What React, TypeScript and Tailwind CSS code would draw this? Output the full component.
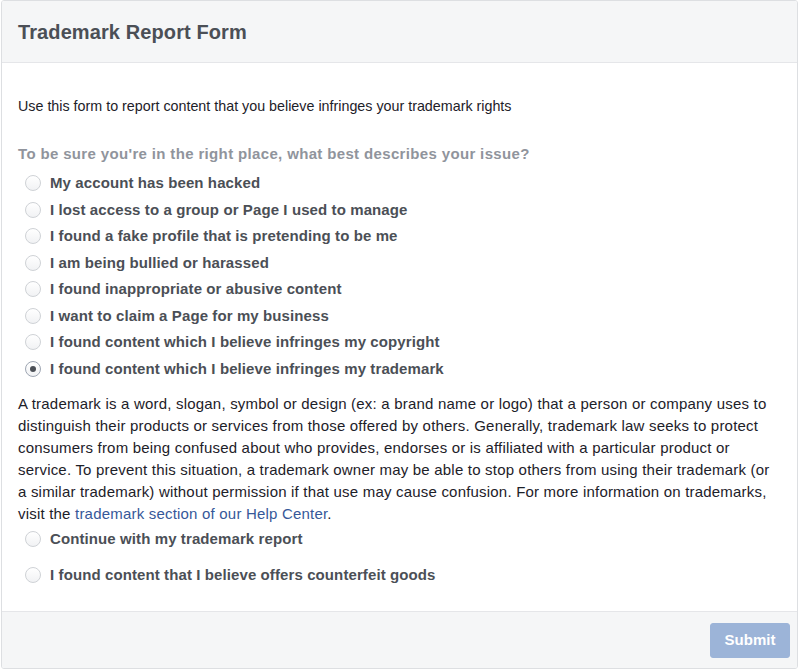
import React, { useState } from 'react'

const issues = [
  'My account has been hacked',
  'I lost access to a group or Page I used to manage',
  'I found a fake profile that is pretending to be me',
  'I am being bullied or harassed',
  'I found inappropriate or abusive content',
  'I want to claim a Page for my business',
  'I found content which I believe infringes my copyright',
  'I found content which I believe infringes my trademark',
]

const followUps = [
  'Continue with my trademark report',
  'I found content that I believe offers counterfeit goods',
]

const Radio: React.FC<{ checked: boolean }> = ({ checked }) => (
  <span
    className={`w-[16px] h-[16px] rounded-full border flex items-center justify-center flex-shrink-0 bg-gradient-to-b from-white to-[#f1f2f4] ${
      checked ? 'border-[#9ea6b3]' : 'border-[#cfd2d6]'
    }`}
  >
    {checked && <span className="w-[6px] h-[6px] rounded-full bg-[#4b4f56]"></span>}
  </span>
)

export default function App() {
  const [issue, setIssue] = useState(7)
  const [followUp, setFollowUp] = useState<number | null>(null)

  return (
    <div className="w-[800px] h-[670px] bg-white" style={{ fontFamily: '"Liberation Sans", Arial, sans-serif' }}>
      <div className="ml-px w-[797px] h-[669px] border border-[#dddfe2] rounded-[3px] flex flex-col overflow-hidden">
        {/* Header */}
        <div className="h-[62px] bg-[#f5f6f7] border-b border-[#e5e6e9] flex items-center px-4 flex-shrink-0">
          <h1 className="text-[20px] font-bold tracking-[0.1px] text-[#4b4f56] pt-px">Trademark Report Form</h1>
        </div>

        {/* Body */}
        <div className="flex-1 px-4 pt-[34px]">
          <p className="text-[14.3px] leading-[18px] text-[#1d2129]">
            Use this form to report content that you believe infringes your trademark rights
          </p>

          <p className="mt-[30px] text-[15px] leading-[18px] font-bold tracking-[0.35px] text-[#90949c]">
            To be sure you're in the right place, what best describes your issue?
          </p>

          <div className="mt-[7px] flex flex-col">
            {issues.map((label, i) => (
              <label
                key={label}
                onClick={() => setIssue(i)}
                className="h-[26.5px] flex items-center gap-[9px] pl-[7px] cursor-pointer"
              >
                <Radio checked={issue === i} />
                <span className="text-[15px] font-bold tracking-[0.1px] text-[#4b4f56]">{label}</span>
              </label>
            ))}
          </div>

          <p className="mt-[11px] text-[15px] leading-[22px] text-[#1d2129] tracking-[0.2px] whitespace-nowrap">
            A trademark is a word, slogan, symbol or design (ex: a brand name or logo) that a person or company uses to
            <br />
            distinguish their products or services from those offered by others. Generally, trademark law seeks to protect
            <br />
            consumers from being confused about who provides, endorses or is affiliated with a particular product or
            <br />
            service. To prevent this situation, a trademark owner may be able to stop others from using their trademark (or
            <br />
            a similar trademark) without permission if that use may cause confusion. For more information on trademarks,
            <br />
            visit the <a className="text-[#365899]">trademark section of our Help Center</a>.
          </p>

          <div className="mt-[1px] flex flex-col gap-[10px]">
            {followUps.map((label, i) => (
              <label
                key={label}
                onClick={() => setFollowUp(i)}
                className="h-[26px] flex items-center gap-[9px] pl-[7px] cursor-pointer"
              >
                <Radio checked={followUp === i} />
                <span className="text-[15px] font-bold tracking-[0.1px] text-[#4b4f56]">{label}</span>
              </label>
            ))}
          </div>
        </div>

        {/* Footer */}
        <div className="h-[57px] bg-[#f5f6f7] border-t border-[#e5e6e9] flex justify-end items-start pt-[11px] pr-[7px] flex-shrink-0">
          <button className="w-[80px] h-[35px] rounded-[3px] bg-[#9cb4d8] border border-[#9cb4d8] text-white text-[15px] font-bold">
            Submit
          </button>
        </div>
      </div>
    </div>
  )
}
